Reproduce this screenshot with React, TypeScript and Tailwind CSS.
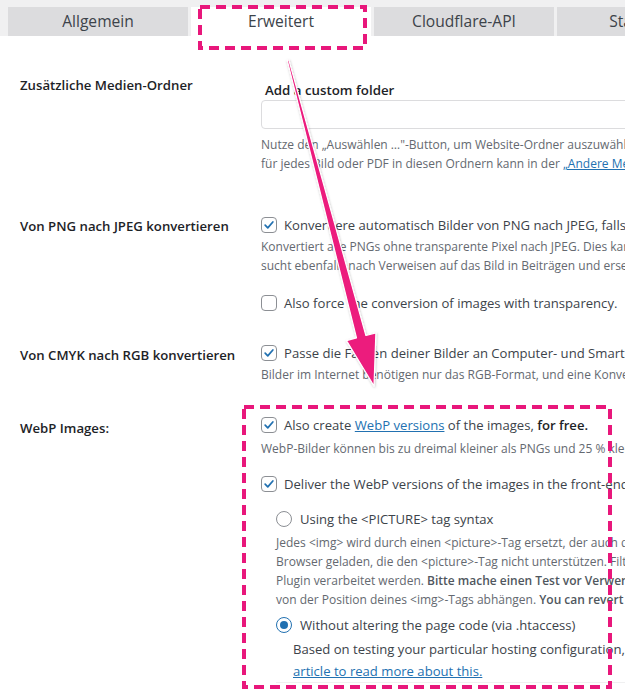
import React from "react";

const LABEL = "text-[13.2px] font-semibold text-[#1d2327] leading-[20px] whitespace-nowrap";
const MAIN = "text-[13.1px] leading-[20px] text-[#3c434a] whitespace-nowrap";
const DESC = "text-[12px] leading-[19px] text-[#646970] whitespace-nowrap";

function Check({ checked }: { checked?: boolean }) {
  return (
    <span className="w-4 h-4 shrink-0 rounded-[4px] border border-[#8c8f94] bg-white flex items-center justify-center">
      {checked && (
        <svg viewBox="0 0 16 16" className="w-[14px] h-[14px]">
          <path d="M3.6 8.2 L6.6 11.2 L12.4 4.6" fill="none" stroke="#2271b1" strokeWidth="2" strokeLinecap="round" strokeLinejoin="round" />
        </svg>
      )}
    </span>
  );
}

function Radio({ checked }: { checked?: boolean }) {
  return (
    <span
      className={`w-4 h-4 shrink-0 rounded-full bg-white flex items-center justify-center border ${
        checked ? "border-[#2271b1] border-[1.5px]" : "border-[#8c8f94]"
      }`}
    >
      {checked && <span className="w-2 h-2 rounded-full bg-[#2271b1]" />}
    </span>
  );
}

function Tab({ label, active }: { label: string; active?: boolean }) {
  return (
    <div
      className={`w-[180px] h-[29px] shrink-0 flex items-center justify-center text-[15.6px] text-[#3c434a] ${
        active ? "bg-white" : "bg-[#dcdcde]"
      }`}
    >
      {label}
    </div>
  );
}

function Row({
  label,
  labelClass,
  className,
  children,
}: {
  label: string;
  labelClass?: string;
  className?: string;
  children: React.ReactNode;
}) {
  return (
    <div className={`flex ${className ?? ""}`}>
      <div className="w-[261px] shrink-0 pl-[20px]">
        <div className={`${LABEL} ${labelClass ?? ""}`}>{label}</div>
      </div>
      <div className="w-[700px] shrink-0">{children}</div>
    </div>
  );
}

function CheckLine({ checked, children, className }: { checked?: boolean; children: React.ReactNode; className?: string }) {
  return (
    <div className={`flex items-center gap-[7px] h-[20px] ${className ?? ""}`}>
      <Check checked={checked} />
      <span className={MAIN}>{children}</span>
    </div>
  );
}

function RadioLine({ checked, children, className }: { checked?: boolean; children: React.ReactNode; className?: string }) {
  return (
    <div className={`flex items-center gap-[8px] h-[20px] ${className ?? ""}`}>
      <Radio checked={checked} />
      <span className={MAIN}>{children}</span>
    </div>
  );
}

export default function App() {
  return (
    <div className="relative w-[625px] h-[695px] overflow-hidden bg-white font-['Open_Sans',sans-serif] text-[#3c434a]">
      <div className="h-[36px] bg-[#f0f0f1] pt-[7px] pl-[8px] flex gap-[3px] overflow-hidden">
        <Tab label="Allgemein" />
        <Tab label="Erweitert" active />
        <Tab label="Cloudflare-API" />
        <Tab label="Statistiken" />
      </div>

      <Row label="Zusätzliche Medien-Ordner" className="mt-[39px]">
        <div className="mt-[5px] pl-[4px] text-[13.3px] font-semibold text-[#1d2327] leading-[20px]">Add a custom folder</div>
        <div className="h-[29px] w-[500px] rounded-[4px] border border-[#dcdcde] bg-white" />
        <div className="mt-[6px]">
          <div className={DESC}>Nutze den „Auswählen …"-Button, um Website-Ordner auszuwählen. Shortpixel wird die Bilder</div>
          <div className={DESC}>
            für jedes Bild oder PDF in diesen Ordnern kann in der{" "}
            <span className="text-[#2271b1] underline">„Andere Medien"</span>-Ansicht überprüft werden.
          </div>
        </div>
      </Row>

      <Row label="Von PNG nach JPEG konvertieren" labelClass="mt-[1px]" className="mt-[42px]">
        <CheckLine checked>Konvertiere automatisch Bilder von PNG nach JPEG, falls möglich.</CheckLine>
        <div className="mt-[2px]">
          <div className={DESC}>Konvertiert alle PNGs ohne transparente Pixel nach JPEG. Dies kann die Dateigröße deutlich verringern.</div>
          <div className={DESC}>sucht ebenfalls nach Verweisen auf das Bild in Beiträgen und ersetzt sie.</div>
        </div>
        <CheckLine className="mt-[18px]">Also force the conversion of images with transparency.</CheckLine>
      </Row>

      <Row label="Von CMYK nach RGB konvertieren" labelClass="mt-[2px]" className="mt-[30px]">
        <CheckLine checked>Passe die Farben deiner Bilder an Computer- und Smartphone-Bildschirme an.</CheckLine>
        <div className={`${DESC} mt-[2px]`}>Bilder im Internet benötigen nur das RGB-Format, und eine Konvertierung verringert die Dateigröße.</div>
      </Row>

      <Row label="WebP Images:" labelClass="mt-[3px] font-normal" className="mt-[31px]">
        <CheckLine checked>
          Also create <span className="text-[#2271b1] underline">WebP versions</span> of the images,{" "}
          <span className="font-semibold text-[#1d2327]">for free.</span>
        </CheckLine>
        <div className={`${DESC} mt-[4px]`}>WebP-Bilder können bis zu dreimal kleiner als PNGs und 25 % kleiner als JPGs sein.</div>
        <CheckLine checked className="mt-[16px]">Deliver the WebP versions of the images in the front-end:</CheckLine>
        <div className="pl-[15px]">
          <RadioLine className="mt-[15px]">Using the {"<PICTURE>"} tag syntax</RadioLine>
          <div className="mt-[4px]">
            <div className={DESC}>Jedes {"<img>"} wird durch einen {"<picture>"}-Tag ersetzt, der auch das Originalbild enthält für</div>
            <div className={DESC}>Browser geladen, die den {"<picture>"}-Tag nicht unterstützen. Filter und Stile könnten</div>
            <div className={DESC}>
              Plugin verarbeitet werden. <span className="font-semibold text-[#50575e]">Bitte mache einen Test vor Verwendung dieser Option.</span>
            </div>
            <div className={DESC}>
              von der Position deines {"<img>"}-Tags abhängen. <span className="font-semibold text-[#50575e]">You can revert anytime.</span>
            </div>
          </div>
          <RadioLine checked className="mt-[6px]">Without altering the page code (via .htaccess)</RadioLine>
          <div className="pl-[17px] mt-[3px]">
            <div className="text-[13.1px] leading-[22px] text-[#3c434a] whitespace-nowrap">
              Based on testing your particular hosting configuration, we determined that your server
            </div>
            <div className="text-[13.1px] leading-[22px] whitespace-nowrap">
              <span className="text-[#2271b1] underline">article to read more about this.</span>
            </div>
          </div>
          <div className="h-px bg-[#f0f0f1]" />
        </div>
      </Row>

      <svg
        className="absolute left-0 top-0 pointer-events-none"
        width="625"
        height="695"
        viewBox="0 0 625 695"
      >
        <defs>
          <filter id="sh" x="-20%" y="-20%" width="140%" height="140%">
            <feDropShadow dx="0.5" dy="1" stdDeviation="1" floodColor="#000" floodOpacity="0.25" />
          </filter>
        </defs>
        <rect x="200" y="7" width="165" height="41" fill="none" stroke="#e8177b" strokeWidth="4" strokeDasharray="10 6" />
        <rect x="244" y="407" width="366" height="280" fill="none" stroke="#e8177b" strokeWidth="4" strokeDasharray="10 6" />
        <polygon
          points="287.2,60.2 356.5,337.9 346.5,340.6 374,386 375.9,332.8 365.9,335.5 288.8,59.8"
          fill="#ec1a7d"
          stroke="#ffffff"
          strokeWidth="1.2"
          strokeLinejoin="round"
          filter="url(#sh)"
        />
      </svg>
    </div>
  );
}
